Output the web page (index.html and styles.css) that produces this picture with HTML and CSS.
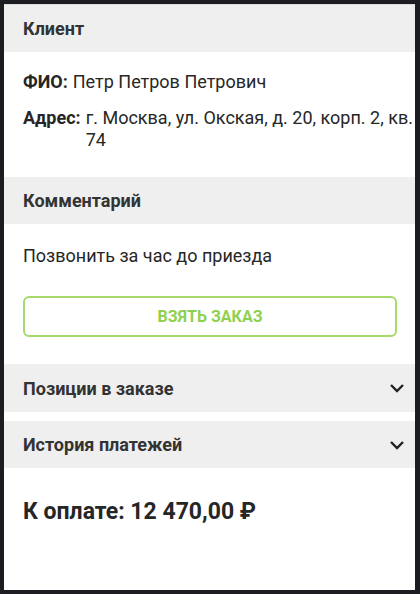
FILE: index.html
```html
<!DOCTYPE html>
<html lang="ru">
<head>
    <meta charset="UTF-8">
    <meta name="viewport" content="width=device-width, initial-scale=1.0">
    <title>Заказ</title>
    <link rel="stylesheet" href="styles.css">
</head>
<body>
    <div class="screen">
        <div class="section-title">Клиент</div>
        <div class="client">
            <div class="field">
                <span class="field-label">ФИО:</span>
                <span class="field-value">Петр Петров Петрович</span>
            </div>
            <div class="field">
                <span class="field-label">Адрес:</span>
                <span class="field-value">г. Москва, ул. Окская, д. 20, корп. 2, кв. 74</span>
            </div>
        </div>

        <div class="section-title">Комментарий</div>
        <div class="comment">
            <p class="comment-text">Позвонить за час до приезда</p>
            <button class="take-button">ВЗЯТЬ ЗАКАЗ</button>
        </div>

        <div class="section-title collapsible">
            <span>Позиции в заказе</span>
            <svg class="chevron" width="16" height="10" viewBox="0 0 16 10"><path d="M2 2l6 6 6-6" fill="none" stroke="#222" stroke-width="2.4"/></svg>
        </div>
        <div class="section-title collapsible spaced">
            <span>История платежей</span>
            <svg class="chevron" width="16" height="10" viewBox="0 0 16 10"><path d="M2 2l6 6 6-6" fill="none" stroke="#222" stroke-width="2.4"/></svg>
        </div>

        <div class="total">К оплате: 12&nbsp;470,00 ₽</div>
    </div>
</body>
</html>
```

FILE: styles.css
```css
html, body {
    margin: 0;
    padding: 0;
}

body {
    background: #1c1d20;
    font-family: Roboto, "Noto Sans", sans-serif;
    color: #262626;
}

.screen {
    margin: 4px 5px 4px 4px;
    height: 585px;
    background: #fff;
    border-top: 1px solid #dcdcdc;
    overflow: hidden;
}

.section-title {
    background: #efefef;
    height: 47px;
    padding: 0 19px;
    display: flex;
    align-items: center;
    font-size: 18px;
    font-weight: bold;
    color: #333;
}

.section-title.collapsible {
    justify-content: space-between;
    height: 48px;
    padding-right: 10px;
}

.section-title.spaced {
    margin-top: 9px;
    height: 47px;
}

.client {
    padding: 19px 0 26px 19px;
    display: flex;
    flex-direction: column;
    gap: 14px;
}

.field {
    display: flex;
    font-size: 18px;
    line-height: 22px;
}

.field-label {
    font-weight: bold;
    margin-right: 5px;
    flex-shrink: 0;
}

.comment {
    padding: 21px 18px 27px 19px;
}

.comment-text {
    margin: 0 0 29px;
    font-size: 18px;
    line-height: 22px;
}

.take-button {
    display: block;
    width: 100%;
    height: 41px;
    background: #fff;
    border: 2px solid #a6db6b;
    border-radius: 6px;
    color: #8fd14f;
    font-family: inherit;
    font-size: 16px;
    font-weight: bold;
    cursor: pointer;
}

.chevron {
    display: block;
}

.total {
    padding: 30px 19px;
    font-size: 23px;
    line-height: 28px;
    font-weight: bold;
    color: #262626;
}
```
